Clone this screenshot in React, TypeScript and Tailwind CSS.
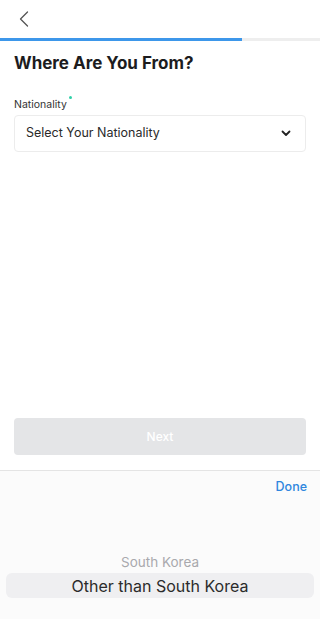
export default function App() {
  return (
    <main className="w-[320px] h-[619px] bg-white flex flex-col overflow-hidden font-['Inter','Liberation_Sans',sans-serif]">
      {/* Top bar */}
      <header className="h-[38px] flex items-center pl-[19px]">
        <svg width="10" height="16" viewBox="0 0 10 16" fill="none" stroke="#555" strokeWidth="1.3" strokeLinecap="round" strokeLinejoin="round">
          <path d="M8.5 1 1.5 8l7 7" />
        </svg>
      </header>

      {/* Progress */}
      <div className="h-[3px] bg-[#eeeeee] flex">
        <div className="w-[242px] bg-[#3d97ea]" />
      </div>

      {/* Form */}
      <section className="px-[14px] flex-1 flex flex-col">
        <h1 className="mt-[11px] text-[17px] font-bold text-[#1c1c1e] leading-[22px]">Where Are You From?</h1>

        <div className="mt-[24px] flex items-start text-[10.5px] text-[#333] leading-[14px]">
          Nationality
          <span className="ml-[2px] -mt-[2px] w-[3px] h-[3px] rounded-full bg-[#2fd0a8]" />
        </div>

        <button className="mt-[3px] h-[37px] w-full rounded-[4px] border border-[#ececec] flex items-center justify-between pl-[11px] pr-[14px] text-[12.5px] text-[#2a2a2a]">
          Select Your Nationality
          <svg width="10" height="7" viewBox="0 0 10 7" fill="none" stroke="#222" strokeWidth="1.8" strokeLinecap="round" strokeLinejoin="round">
            <path d="M1.5 1.5 5 5l3.5-3.5" />
          </svg>
        </button>

        <div className="flex-1" />

        <button className="mb-[15px] h-[37px] w-full rounded-[4px] bg-[#e4e5e7] text-white text-[12px] font-medium">
          Next
        </button>
      </section>

      {/* Picker */}
      <div className="h-[149px] bg-[#fbfbfb] border-t border-[#e4e4e4] flex flex-col">
        <div className="h-[32px] flex items-center justify-end pr-[13px]">
          <span className="text-[12.5px] font-medium text-[#2f86de] leading-[16px]">Done</span>
        </div>
        <div className="flex-1 flex flex-col justify-end pb-[21px] px-[6px]">
          <div className="text-center text-[13.5px] text-[#a9a9ad] leading-[18px] mb-[2px]">South Korea</div>
          <div className="h-[25px] rounded-[6px] bg-[#efeff1] flex items-center justify-center text-[16px] text-[#2b2b2b]">
            Other than South Korea
          </div>
        </div>
      </div>
    </main>
  )
}
